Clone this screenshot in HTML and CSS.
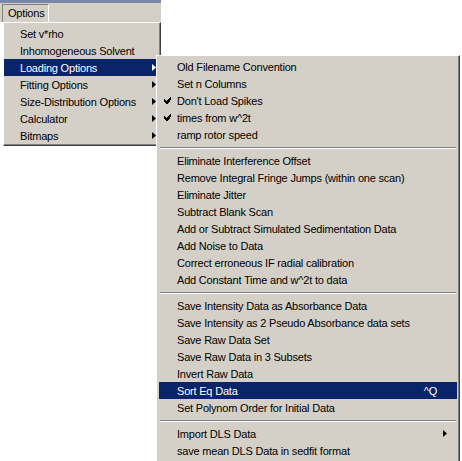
FILE: index.html
```html
<!DOCTYPE html>
<html>
<head>
<meta charset="utf-8">
<link rel="stylesheet" href="styles.css">
</head>
<body>
<div class="titlebar"></div>
<div class="menubar"><span class="mbtn">Options</span></div>

<div class="menu main">
  <div class="item"><span class="chk"></span><span class="label">Set v*rho</span><span class="arr"></span></div>
  <div class="item"><span class="chk"></span><span class="label">Inhomogeneous Solvent</span><span class="arr"></span></div>
  <div class="item hl"><span class="chk"></span><span class="label">Loading Options</span><span class="arr"><svg width="4" height="7" viewBox="0 0 4 7"><polygon points="0,0 4,3.5 0,7"/></svg></span></div>
  <div class="item"><span class="chk"></span><span class="label">Fitting Options</span><span class="arr"><svg width="4" height="7" viewBox="0 0 4 7"><polygon points="0,0 4,3.5 0,7"/></svg></span></div>
  <div class="item"><span class="chk"></span><span class="label">Size-Distribution Options</span><span class="arr"><svg width="4" height="7" viewBox="0 0 4 7"><polygon points="0,0 4,3.5 0,7"/></svg></span></div>
  <div class="item"><span class="chk"></span><span class="label">Calculator</span><span class="arr"><svg width="4" height="7" viewBox="0 0 4 7"><polygon points="0,0 4,3.5 0,7"/></svg></span></div>
  <div class="item"><span class="chk"></span><span class="label">Bitmaps</span><span class="arr"><svg width="4" height="7" viewBox="0 0 4 7"><polygon points="0,0 4,3.5 0,7"/></svg></span></div>
</div>

<div class="menu sub">
  <div class="item"><span class="chk"></span><span class="label">Old Filename Convention</span><span class="key"></span><span class="arr"></span></div>
  <div class="item"><span class="chk"></span><span class="label">Set n Columns</span><span class="key"></span><span class="arr"></span></div>
  <div class="item"><span class="chk"><svg width="7" height="7" viewBox="0 0 7 7" shape-rendering="crispEdges"><path d="M6 0h1v3h-1zM5 1h1v4h-1zM4 2h1v4h-1zM3 3h1v4h-1zM2 4h1v3h-1zM1 3h1v3h-1zM0 2h1v3h-1z"/></svg></span><span class="label">Don't Load Spikes</span><span class="key"></span><span class="arr"></span></div>
  <div class="item"><span class="chk"><svg width="7" height="7" viewBox="0 0 7 7" shape-rendering="crispEdges"><path d="M6 0h1v3h-1zM5 1h1v4h-1zM4 2h1v4h-1zM3 3h1v4h-1zM2 4h1v3h-1zM1 3h1v3h-1zM0 2h1v3h-1z"/></svg></span><span class="label">times from w^2t</span><span class="key"></span><span class="arr"></span></div>
  <div class="item"><span class="chk"></span><span class="label">ramp rotor speed</span><span class="key"></span><span class="arr"></span></div>
  <div class="sep"></div>
  <div class="item"><span class="chk"></span><span class="label">Eliminate Interference Offset</span><span class="key"></span><span class="arr"></span></div>
  <div class="item"><span class="chk"></span><span class="label">Remove Integral Fringe Jumps (within one scan)</span><span class="key"></span><span class="arr"></span></div>
  <div class="item"><span class="chk"></span><span class="label">Eliminate Jitter</span><span class="key"></span><span class="arr"></span></div>
  <div class="item"><span class="chk"></span><span class="label">Subtract Blank Scan</span><span class="key"></span><span class="arr"></span></div>
  <div class="item"><span class="chk"></span><span class="label">Add or Subtract Simulated Sedimentation Data</span><span class="key"></span><span class="arr"></span></div>
  <div class="item"><span class="chk"></span><span class="label">Add Noise to Data</span><span class="key"></span><span class="arr"></span></div>
  <div class="item"><span class="chk"></span><span class="label">Correct erroneous IF radial calibration</span><span class="key"></span><span class="arr"></span></div>
  <div class="item"><span class="chk"></span><span class="label">Add Constant Time and w^2t to data</span><span class="key"></span><span class="arr"></span></div>
  <div class="sep"></div>
  <div class="item"><span class="chk"></span><span class="label">Save Intensity Data as Absorbance Data</span><span class="key"></span><span class="arr"></span></div>
  <div class="item"><span class="chk"></span><span class="label">Save Intensity as 2 Pseudo Absorbance data sets</span><span class="key"></span><span class="arr"></span></div>
  <div class="item"><span class="chk"></span><span class="label">Save Raw Data Set</span><span class="key"></span><span class="arr"></span></div>
  <div class="item"><span class="chk"></span><span class="label">Save Raw Data in 3 Subsets</span><span class="key"></span><span class="arr"></span></div>
  <div class="item"><span class="chk"></span><span class="label">Invert Raw Data</span><span class="key"></span><span class="arr"></span></div>
  <div class="item hl"><span class="chk"></span><span class="label">Sort Eq Data</span><span class="key">^Q</span><span class="arr"></span></div>
  <div class="item"><span class="chk"></span><span class="label">Set Polynom Order for Initial Data</span><span class="key"></span><span class="arr"></span></div>
  <div class="sep"></div>
  <div class="item"><span class="chk"></span><span class="label">Import DLS Data</span><span class="key"></span><span class="arr"><svg width="4" height="7" viewBox="0 0 4 7"><polygon points="0,0 4,3.5 0,7"/></svg></span></div>
  <div class="item"><span class="chk"></span><span class="label">save mean DLS Data in sedfit format</span><span class="key"></span><span class="arr"></span></div>
</div>
</body>
</html>
```

FILE: styles.css
```css
html, body {
  margin: 0;
  padding: 0;
}
body {
  width: 462px;
  height: 461px;
  overflow: hidden;
  background: #ffffff;
  position: relative;
  font-family: "Liberation Sans", Arial, sans-serif;
  font-size: 11px;
  letter-spacing: -0.2px;
  color: #000;
}
.titlebar {
  width: 161px;
  height: 3px;
  background: #7888a6;
}
.menubar {
  width: 161px;
  height: 19px;
  background: #d4d0c8;
  display: flex;
  align-items: flex-start;
  padding: 1px 0 0 2px;
  box-sizing: border-box;
}
.mbtn {
  display: block;
  height: 18px;
  line-height: 17px;
  padding: 0 4px 0 5px;
  border-top: 1px solid #808080;
  border-left: 1px solid #808080;
  border-right: 1px solid #ffffff;
  box-sizing: border-box;
  width: 47px;
}
.menu {
  position: absolute;
  background: #d4d0c8;
  box-sizing: border-box;
  border-top: 1px solid #ffffff;
  border-left: 1px solid #ffffff;
  border-right: 1px solid #404040;
  border-bottom: 1px solid #404040;
  box-shadow: inset -1px -1px 0 #808080;
  display: flex;
  flex-direction: column;
}
.main {
  left: 3px;
  top: 22px;
  width: 158px;
  padding: 2px 2px 1px 0;
}
.sub {
  left: 156px;
  top: 55px;
  width: 304px;
  height: 420px;
  padding: 2px 2px 0 2px;
}
.item {
  display: flex;
  align-items: center;
  height: 17px;
  white-space: nowrap;
}
.item.hl {
  background: #0a246a;
  color: #ffffff;
}
.item.hl svg {
  fill: #ffffff;
}
.chk {
  flex: 0 0 auto;
  display: flex;
  align-items: center;
}
.main .chk { width: 16px; }
.sub .chk { width: 18px; padding-left: 5px; box-sizing: border-box; }
.label {
  flex: 1 1 auto;
}
.key {
  flex: 0 0 auto;
  padding-right: 6px;
}
.arr {
  flex: 0 0 auto;
  display: flex;
  align-items: center;
}
.main .arr { width: 6px; }
.sub .arr { width: 14px; }
svg { display: block; fill: #000; }
.sep {
  height: 9px;
  display: flex;
  flex-direction: column;
  justify-content: center;
  padding: 0 1px;
}
.sep::before {
  content: "";
  display: block;
  height: 1px;
  background: #808080;
  border-bottom: 1px solid #ffffff;
}
```
